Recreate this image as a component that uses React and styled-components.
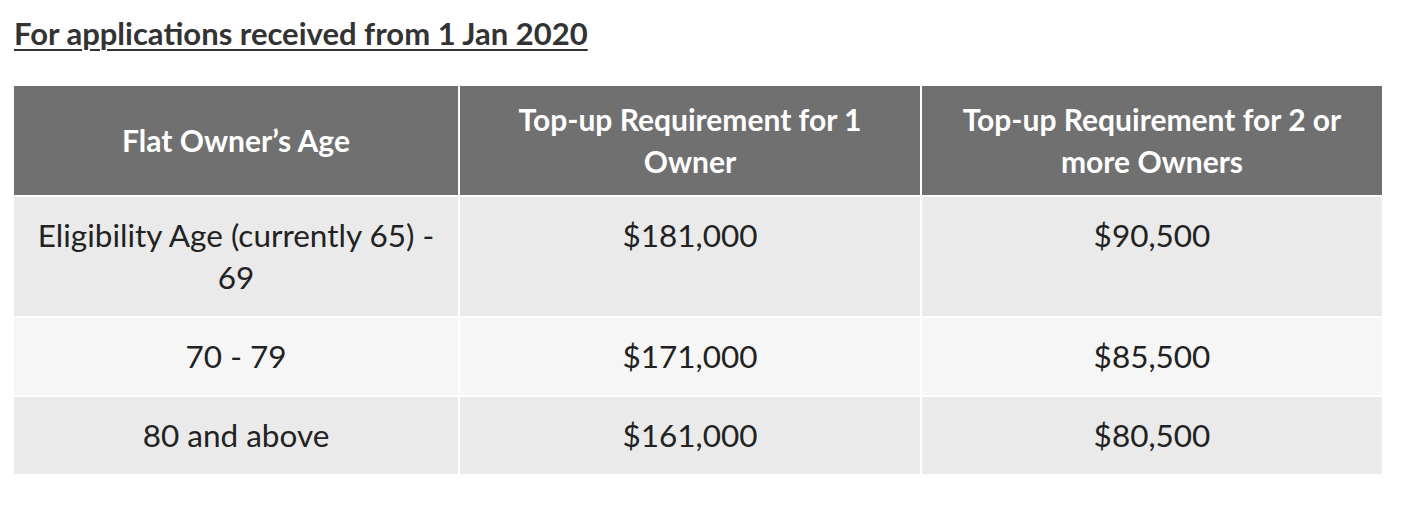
import React from "react";
import styled, { createGlobalStyle } from "styled-components";

const Global = createGlobalStyle`
  html, body { margin: 0; padding: 0; background: #fff; }
  body { font-family: Lato, "Open Sans", sans-serif; }
`;

const Page = styled.div`
  padding: 13px 30px 0 14px;
`;

const Heading = styled.h3`
  margin: 0;
  font-size: 31px;
  line-height: 40px;
  font-weight: 700;
  color: #333;
  text-decoration: underline;
  text-decoration-thickness: 2px;
  text-underline-offset: 4px;
`;

const Table = styled.table`
  margin-top: 31px;
  width: 1370px;
  margin-left: -2px;
  border-collapse: collapse;
  table-layout: fixed;
`;

const Th = styled.th`
  background: #707070;
  color: #fff;
  font-size: 30px;
  font-weight: 700;
  line-height: 42px;
  padding: 12px 20px 13px;
  border: 2px solid #fff;
  text-align: center;
  vertical-align: middle;
`;

const Row = styled.tr`
  background: ${(p) => (p.$alt ? "#f6f6f6" : "#eaeaea")};
`;

const Td = styled.td`
  color: #222;
  font-size: 31.5px;
  font-weight: 400;
  line-height: 42px;
  padding: 17px 20px 18px;
  border: 2px solid #fff;
  text-align: center;
  vertical-align: top;
`;

const rows = [
  ["Eligibility Age (currently 65) - 69", "$181,000", "$90,500"],
  ["70 - 79", "$171,000", "$85,500"],
  ["80 and above", "$161,000", "$80,500"],
];

export default function App() {
  return (
    <Page>
      <Global />
      <Heading>For applications received from 1 Jan 2020</Heading>
      <Table>
        <colgroup>
          <col style={{ width: 446 }} />
          <col style={{ width: 462 }} />
          <col style={{ width: 462 }} />
        </colgroup>
        <thead>
          <tr>
            <Th>Flat Owner’s Age</Th>
            <Th>Top-up Requirement for 1 Owner</Th>
            <Th>Top-up Requirement for 2 or more Owners</Th>
          </tr>
        </thead>
        <tbody>
          {rows.map((r, i) => (
            <Row key={i} $alt={i === 1}>
              {r.map((c, j) => (
                <Td key={j}>{c}</Td>
              ))}
            </Row>
          ))}
        </tbody>
      </Table>
    </Page>
  );
}
